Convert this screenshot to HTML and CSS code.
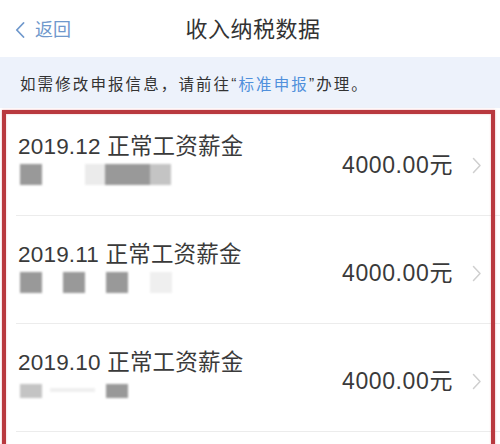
FILE: index.html
```html
<!DOCTYPE html>
<html lang="zh">
<head>
<meta charset="utf-8">
<link rel="stylesheet" href="styles.css">
</head>
<body>
<div class="page">
  <header class="nav">
    <div class="back">
      <svg class="back-icon" width="10" height="16" viewBox="0 0 10 16"><path d="M8.5 1 L1.8 8 L8.5 15" fill="none" stroke="#6f98cc" stroke-width="1.8" stroke-linecap="round" stroke-linejoin="round"/></svg>
      <span>返回</span>
    </div>
    <div class="title">收入纳税数据</div>
  </header>
  <div class="notice">如需修改申报信息，请前往<span class="q">“</span><span class="link">标准申报</span><span class="q">”</span>办理。</div>
  <ul class="list">
    <li class="row">
      <div class="left">
        <div class="name">2019.12 正常工资薪金</div>
        <div class="blur">
          <i class="b dk" style="left:0;width:22px"></i>
          <i class="b lt" style="left:65px;width:20px"></i>
          <i class="b dk" style="left:85px;width:45px"></i>
          <i class="b md" style="left:130px;width:21px"></i>
        </div>
      </div>
      <div class="right">
        <span class="amount">4000.00元</span>
        <svg class="chev" width="10" height="17" viewBox="0 0 10 17"><path d="M1.5 1.5 L8 8.5 L1.5 15.5" fill="none" stroke="#cfcfcf" stroke-width="1.5" stroke-linecap="round" stroke-linejoin="round"/></svg>
      </div>
    </li>
    <li class="row">
      <div class="left">
        <div class="name">2019.11 正常工资薪金</div>
        <div class="blur">
          <i class="b dk" style="left:0;width:22px"></i>
          <i class="b dk" style="left:43px;width:22px"></i>
          <i class="b dk" style="left:86px;width:22px"></i>
          <i class="b xl" style="left:130px;width:22px"></i>
        </div>
      </div>
      <div class="right">
        <span class="amount">4000.00元</span>
        <svg class="chev" width="10" height="17" viewBox="0 0 10 17"><path d="M1.5 1.5 L8 8.5 L1.5 15.5" fill="none" stroke="#cfcfcf" stroke-width="1.5" stroke-linecap="round" stroke-linejoin="round"/></svg>
      </div>
    </li>
    <li class="row">
      <div class="left">
        <div class="name">2019.10 正常工资薪金</div>
        <div class="blur short">
          <i class="b md" style="left:0;width:22px"></i>
          <i class="b xl" style="left:30px;width:45px;height:4px;top:4px"></i>
          <i class="b dk" style="left:86px;width:22px"></i>
        </div>
      </div>
      <div class="right">
        <span class="amount">4000.00元</span>
        <svg class="chev" width="10" height="17" viewBox="0 0 10 17"><path d="M1.5 1.5 L8 8.5 L1.5 15.5" fill="none" stroke="#cfcfcf" stroke-width="1.5" stroke-linecap="round" stroke-linejoin="round"/></svg>
      </div>
    </li>
    <li class="row"></li>
  </ul>
  <div class="highlight"></div>
</div>
</body>
</html>
```
FILE: styles.css
```css
* { box-sizing: border-box; margin: 0; padding: 0; }
html, body { width: 500px; height: 444px; overflow: hidden; background: #fff; }
body { font-family: "Liberation Sans", "Noto Sans CJK SC", sans-serif; color: #333; }
.page { position: relative; width: 500px; height: 444px; overflow: hidden; }

.nav { position: relative; height: 57px; display: flex; align-items: center; justify-content: center; background: #fff; }
.back { position: absolute; left: 15px; top: 20px; display: flex; align-items: center; gap: 10px; color: #6f98cc; font-size: 18px; line-height: 20px; }
.back-icon { display: block; }
.title { font-size: 22px; line-height: 26px; color: #333; margin-left: 6px; margin-top: 2px; letter-spacing: 0.5px; }

.notice { height: 51px; background: #edf2fb; padding-left: 20px; display: flex; align-items: center; font-size: 15.5px; letter-spacing: 2.1px; color: #333; }
.notice .link { color: #5090dc; }
.notice .q { color: #333; }

.list { list-style: none; background: #fff; }
.row { height: 108px; margin-left: 16px; padding-left: 2px; border-bottom: 1px solid #ececec; display: flex; justify-content: space-between; align-items: flex-start; }
.left { padding-top: 26px; display: flex; flex-direction: column; gap: 4px; }
.name { font-size: 22.5px; line-height: 26px; letter-spacing: 0.2px; color: #3a3a3a; white-space: nowrap; }
.blur { position: relative; height: 21px; width: 200px; margin-left: 2px; filter: blur(0.8px); }
.blur.short { height: 14px; margin-top: 4px; }
.b { position: absolute; top: 0; height: 100%; display: block; }
.b.dk { background: #999; }
.b.md { background: #c4c4c4; }
.b.lt { background: #ebebeb; }
.b.xl { background: #efefef; }

.right { display: flex; align-items: center; gap: 19px; padding-right: 18px; padding-top: 44px; }
.amount { font-size: 23px; line-height: 26px; letter-spacing: 0.6px; color: #3a3a3a; white-space: nowrap; }
.chev { display: block; }

.highlight { position: absolute; left: 2px; top: 110px; width: 493px; height: 400px; border: 4px solid #b9393f; box-shadow: 0 0 2px rgba(210, 80, 90, 0.5), inset 0 0 2px rgba(210, 80, 90, 0.4); pointer-events: none; }
```
